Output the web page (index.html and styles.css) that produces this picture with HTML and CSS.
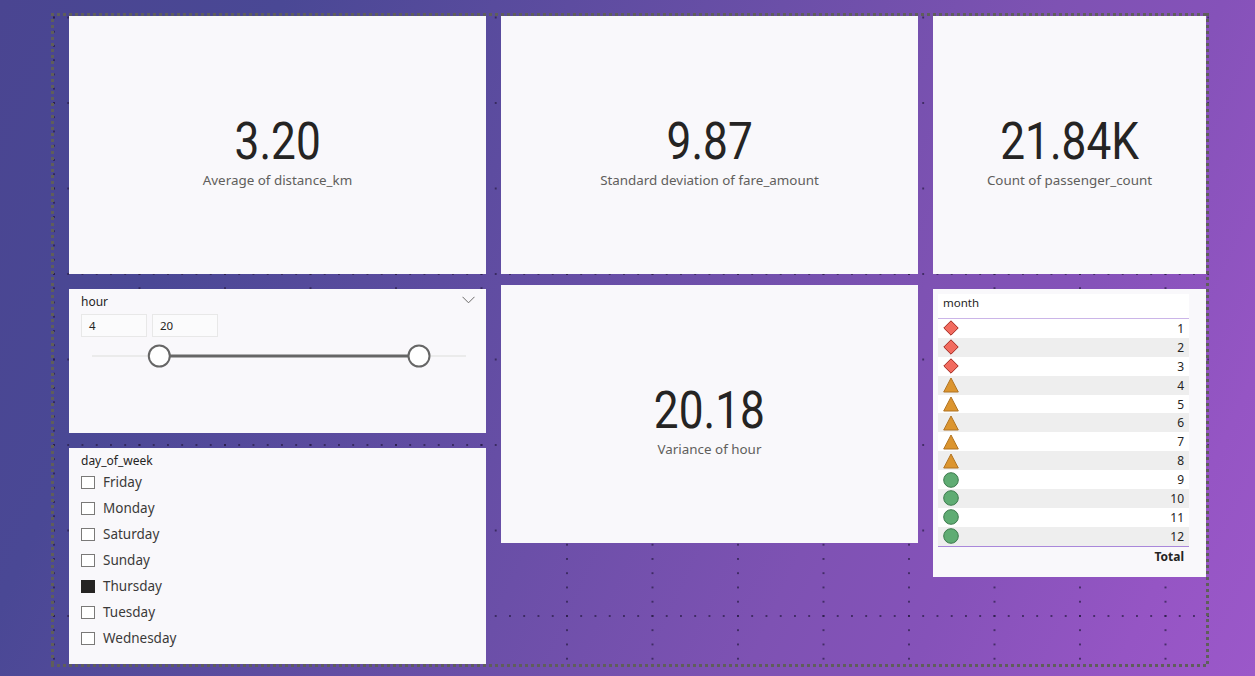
FILE: index.html
```html
<!DOCTYPE html>
<html lang="en">
<head>
<meta charset="utf-8">
<title>Taxi report</title>
<link rel="stylesheet" href="styles.css">
</head>
<body>
<div class="page">
  <div class="col col-a">
    <div class="card kpi">
      <div class="value">3.20</div>
      <div class="label">Average of distance_km</div>
    </div>
    <div class="card range">
      <div class="slicer-head">
        <span>hour</span>
        <svg class="chev" width="13" height="8" viewBox="0 0 13 8"><path d="M0.5 0.8 L6.5 6.8 L12.5 0.8" fill="none" stroke="#6b6a68" stroke-width="1"/></svg>
      </div>
      <div class="inputs">
        <div class="input">4</div>
        <div class="input">20</div>
      </div>
      <svg class="slider" width="386" height="26" viewBox="0 0 386 26">
        <line x1="6" y1="13" x2="380" y2="13" stroke="#ebebeb" stroke-width="2"/>
        <line x1="73.3" y1="13" x2="333" y2="13" stroke="#666666" stroke-width="3"/>
        <circle cx="73.3" cy="13" r="10.5" fill="#ffffff" stroke="#666666" stroke-width="2"/>
        <circle cx="333" cy="13" r="10.5" fill="#ffffff" stroke="#666666" stroke-width="2"/>
      </svg>
    </div>
    <div class="card list">
      <div class="list-title">day_of_week</div>
      <ul class="items">
        <li><span class="box"></span>Friday</li>
        <li><span class="box"></span>Monday</li>
        <li><span class="box"></span>Saturday</li>
        <li><span class="box"></span>Sunday</li>
        <li><span class="box on"></span>Thursday</li>
        <li><span class="box"></span>Tuesday</li>
        <li><span class="box"></span>Wednesday</li>
      </ul>
    </div>
  </div>
  <div class="col col-b">
    <div class="card kpi">
      <div class="value">9.87</div>
      <div class="label">Standard deviation of fare_amount</div>
    </div>
    <div class="card kpi">
      <div class="value">20.18</div>
      <div class="label">Variance of hour</div>
    </div>
  </div>
  <div class="col col-c">
    <div class="card kpi">
      <div class="value">21.84K</div>
      <div class="label">Count of passenger_count</div>
    </div>
    <div class="card table-card">
      <div class="tbl-head">month</div>
      <div class="rows">
        <div class="row"><svg class="ico" width="16" height="16" viewBox="0 0 16 16"><path d="M8 0.8 L15.2 8 L8 15.2 L0.8 8 Z" fill="#f26b5f" stroke="#a3281f" stroke-width="1"/></svg><span>1</span></div>
        <div class="row"><svg class="ico" width="16" height="16" viewBox="0 0 16 16"><path d="M8 0.8 L15.2 8 L8 15.2 L0.8 8 Z" fill="#f26b5f" stroke="#a3281f" stroke-width="1"/></svg><span>2</span></div>
        <div class="row"><svg class="ico" width="16" height="16" viewBox="0 0 16 16"><path d="M8 0.8 L15.2 8 L8 15.2 L0.8 8 Z" fill="#f26b5f" stroke="#a3281f" stroke-width="1"/></svg><span>3</span></div>
        <div class="row"><svg class="ico" width="16" height="16" viewBox="0 0 16 16"><path d="M8 1 L15.3 15 L0.7 15 Z" fill="#dc952f" stroke="#b07322" stroke-width="1"/></svg><span>4</span></div>
        <div class="row"><svg class="ico" width="16" height="16" viewBox="0 0 16 16"><path d="M8 1 L15.3 15 L0.7 15 Z" fill="#dc952f" stroke="#b07322" stroke-width="1"/></svg><span>5</span></div>
        <div class="row"><svg class="ico" width="16" height="16" viewBox="0 0 16 16"><path d="M8 1 L15.3 15 L0.7 15 Z" fill="#dc952f" stroke="#b07322" stroke-width="1"/></svg><span>6</span></div>
        <div class="row"><svg class="ico" width="16" height="16" viewBox="0 0 16 16"><path d="M8 1 L15.3 15 L0.7 15 Z" fill="#dc952f" stroke="#b07322" stroke-width="1"/></svg><span>7</span></div>
        <div class="row"><svg class="ico" width="16" height="16" viewBox="0 0 16 16"><path d="M8 1 L15.3 15 L0.7 15 Z" fill="#dc952f" stroke="#b07322" stroke-width="1"/></svg><span>8</span></div>
        <div class="row"><svg class="ico" width="16" height="16" viewBox="0 0 16 16"><circle cx="8" cy="8" r="7.3" fill="#5fac73" stroke="#3d7a4d" stroke-width="1"/></svg><span>9</span></div>
        <div class="row"><svg class="ico" width="16" height="16" viewBox="0 0 16 16"><circle cx="8" cy="8" r="7.3" fill="#5fac73" stroke="#3d7a4d" stroke-width="1"/></svg><span>10</span></div>
        <div class="row"><svg class="ico" width="16" height="16" viewBox="0 0 16 16"><circle cx="8" cy="8" r="7.3" fill="#5fac73" stroke="#3d7a4d" stroke-width="1"/></svg><span>11</span></div>
        <div class="row"><svg class="ico" width="16" height="16" viewBox="0 0 16 16"><circle cx="8" cy="8" r="7.3" fill="#5fac73" stroke="#3d7a4d" stroke-width="1"/></svg><span>12</span></div>
      </div>
      <div class="total">Total</div>
    </div>
  </div>
</div>
</body>
</html>
```
FILE: styles.css
```css
html, body {
  margin: 0;
  padding: 0;
}

body {
  width: 1255px;
  height: 676px;
  overflow: hidden;
  font-family: "Noto Sans", "Open Sans", sans-serif;
  color: #252423;
  background: linear-gradient(115deg,
    #4a4591 0%,
    #4a4895 18%,
    #6b4fa8 50%,
    #7e52b3 67.5%,
    #8552b9 78%,
    #9555c4 91%,
    #9b58c9 100%);
}

.page {
  box-sizing: border-box;
  width: 1158px;
  height: 654px;
  margin: 13px 0 0 51px;
  padding: 3px 3px 3px 18px;
  display: flex;
  gap: 15px;
  background:
    linear-gradient(90deg, #5f5e5b 3px, transparent 3px) 0 0 / 6px 3px repeat-x,
    linear-gradient(90deg, #5f5e5b 3px, transparent 3px) 0 100% / 6px 3px repeat-x,
    linear-gradient(180deg, #5f5e5b 3px, transparent 3px) 0 0 / 3px 6px repeat-y,
    linear-gradient(180deg, #5f5e5b 3px, transparent 3px) 100% 0 / 3px 6px repeat-y,
    radial-gradient(circle at 1px 1px, rgba(40, 28, 70, 0.7) 0.8px, transparent 1.3px) 2px 3.5px / 85.5px 14.25px,
    radial-gradient(circle at 1px 1px, rgba(40, 28, 70, 0.7) 0.8px, transparent 1.3px) 2px 3.5px / 14.25px 85.5px;
}

.col {
  display: flex;
  flex-direction: column;
}

.col-a { width: 417px; gap: 15px; }
.col-b { width: 417px; gap: 11px; }
.col-c { width: 273px; gap: 15px; }

.card {
  box-sizing: border-box;
  background: #f9f8fb;
}

/* KPI cards */
.kpi {
  height: 258px;
  padding-top: 16px;
  display: flex;
  flex-direction: column;
  align-items: center;
  justify-content: center;
}

.value {
  font-family: Roboto, "Noto Sans", sans-serif;
  font-size: 52px;
  line-height: 52px;
  color: #252423;
  transform: scaleX(0.85);
}

.label {
  margin-top: 2px;
  font-size: 13.4px;
  line-height: 20px;
  color: #605e5c;
}

/* range slicer */
.range {
  height: 144px;
  padding: 5px 11px 0 12px;
}

.slicer-head {
  display: flex;
  justify-content: space-between;
  align-items: center;
  height: 16px;
  font-size: 12px;
  line-height: 16px;
  color: #252423;
}

.chev {
  display: block;
  margin-top: -4px;
}

.inputs {
  display: flex;
  gap: 5px;
  margin-top: 4px;
}

.input {
  box-sizing: border-box;
  width: 66px;
  height: 23px;
  border: 1px solid #e8e8e8;
  background: #fbfbfc;
  font-size: 11.5px;
  line-height: 21px;
  padding-left: 7px;
  color: #252423;
}

.slider {
  display: block;
  margin: 6px 0 0 5px;
}

/* list slicer */
.list {
  height: 216px;
  padding: 5px 12px 0 12px;
}

.list-title {
  font-size: 12px;
  line-height: 16px;
  color: #252423;
}

.items {
  list-style: none;
  margin: 0;
  padding: 0;
}

.items li {
  height: 26px;
  display: flex;
  align-items: center;
  gap: 8px;
  font-size: 13.5px;
  color: #3b3a39;
}

.box {
  box-sizing: border-box;
  width: 14px;
  height: 13px;
  border: 1px solid #7a7978;
  background: #fff;
}

.box.on {
  background: #252423;
  border-color: #252423;
}

/* table */
.table-card {
  height: 288px;
  padding: 5px 17px 0 5px;
}

.tbl-head {
  box-sizing: border-box;
  height: 25px;
  padding: 2px 0 0 5px;
  background: #ffffff;
  font-size: 11.5px;
  line-height: 14px;
  color: #252423;
  border-bottom: 1px solid #cbb5e8;
}

.rows {
  border-bottom: 1px solid #a987da;
}

.row {
  height: 18.9px;
  display: flex;
  align-items: center;
  justify-content: space-between;
  padding: 0 5px;
  background: #ffffff;
  font-size: 12px;
  color: #252423;
}

.row:nth-child(even) {
  background: #eeeeee;
}

.ico {
  display: block;
}

.total {
  height: 20px;
  line-height: 20px;
  text-align: right;
  padding-right: 5px;
  font-size: 12px;
  font-weight: 700;
  color: #252423;
}
```
